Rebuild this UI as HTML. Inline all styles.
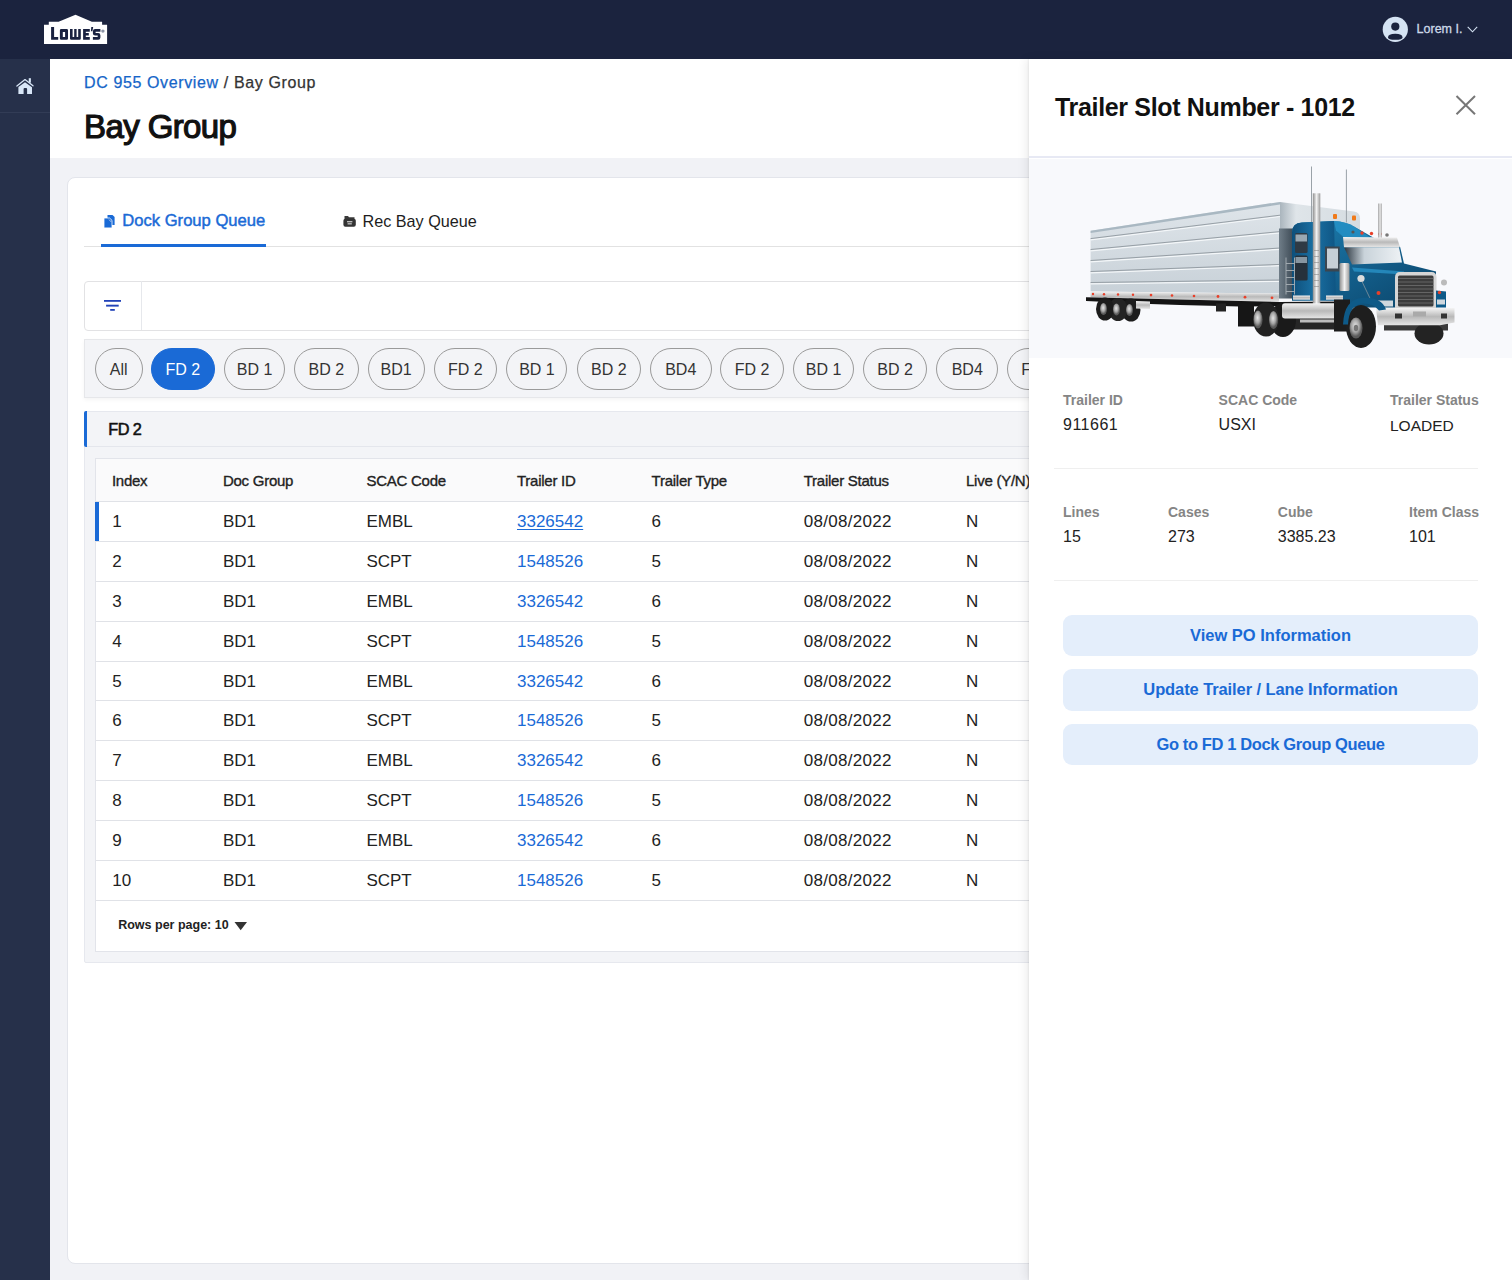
<!DOCTYPE html>
<html><head><meta charset="utf-8"><style>
*{box-sizing:border-box;margin:0;padding:0}
html,body{width:1512px;height:1280px;overflow:hidden;background:#f1f2f6;font-family:"Liberation Sans",sans-serif;color:#222}
.t{position:absolute;white-space:nowrap}
.b{position:absolute}
</style></head><body>
<div class="b" style="left:0;top:0;width:1512px;height:59px;background:#1b233e"></div>
<svg class="b" style="left:40px;top:10px" width="72" height="40" viewBox="40 10 72 40">
<polygon fill="#fff" points="44,24.8 48.8,24.8 48.8,21.7 58.6,21.7 75.5,14.8 91.9,21.7 102.1,21.7 102.1,24.8 107.1,24.8 107.1,44 44,44"/>
<g fill="#1a2240">
<path d="M51.1,26.9 H54.1 V37 H58.2 V39.7 H51.1Z"/>
<path fill-rule="evenodd" d="M61.2,29 H66.7 Q68,29 68,30.3 V38.4 Q68,39.7 66.7,39.7 H61.2 Q59.9,39.7 59.9,38.4 V30.3 Q59.9,29 61.2,29Z M62.8,31.9 V37 H65.1 V31.9Z"/>
<path d="M70,29 H72.6 V37 H74.2 V29 H76.6 V37 H78.2 V29 H80.8 V38.4 Q80.8,39.7 79.5,39.7 H71.3 Q70,39.7 70,38.4Z"/>
<path d="M83.1,29 H89.8 V31.7 H85.8 V33 H88.8 V35.5 H85.8 V37 H89.8 V39.7 H83.1Z"/>
<path d="M91.3,27.1 H93.2 L92.4,31.3 H90.9Z"/>
<path d="M100.4,29 H95.1 Q92.9,29 92.9,31.2 V33.4 Q92.9,35.5 95.1,35.5 H97.7 V37 H92.9 V39.7 H98.2 Q100.4,39.7 100.4,37.5 V35.2 Q100.4,33 98.2,33 H95.6 V31.7 H100.4Z"/>
</g>
<circle cx="102.9" cy="31.1" r="1.7" fill="#8d95a6"/>
</svg>
<svg class="b" style="left:1382px;top:16px" width="27" height="27" viewBox="0 0 27 27">
<circle cx="13.3" cy="13.4" r="12.6" fill="#d5e3f3"/>
<circle cx="13.3" cy="10.6" r="4.1" fill="#1b233e"/>
<path d="M6,21.4 Q6,17.7 13.3,17.7 Q20.5,17.7 20.5,21.4 Q20.5,23.8 13.3,23.8 Q6,23.8 6,21.4Z" fill="#1b233e"/>
</svg>
<div class="t " style="left:1416.6px;top:23.12px;font-size:12.5px;line-height:12.5px;color:#cdd9e8;-webkit-text-stroke:0.3px #cdd9e8">Lorem I.</div>
<svg class="b" style="left:1466px;top:25px" width="13" height="9" viewBox="0 0 13 9">
<polyline points="1.7,1.8 6.5,6.8 11.2,1.8" fill="none" stroke="#d5e3f3" stroke-width="1.1"/>
</svg>
<div class="b" style="left:0;top:59px;width:50px;height:1221px;background:#26304a"></div>
<div class="b" style="left:0;top:112px;width:50px;height:1px;background:#323c56"></div>
<svg class="b" style="left:14px;top:76px" width="22" height="20" viewBox="14 76 22 20">
<rect x="28.75" y="78.2" width="2.15" height="4.5" fill="#d8e6f7"/>
<path d="M18.4,87 L25,82.3 L32,87.3 L32,93.9 L27.1,93.9 L27.1,89 Q27.1,88 26.1,88 L24.6,88 Q23.6,88 23.6,89 L23.6,93.9 L18.4,93.9Z" fill="#d8e6f7"/>
<polyline points="16.9,86 25,79.6 33,85.8" fill="none" stroke="#d8e6f7" stroke-width="1.3" stroke-linecap="round" stroke-linejoin="round"/>
</svg>
<div class="b" style="left:50px;top:59px;width:1462px;height:99px;background:#fff"></div>
<div class="t " style="left:84px;top:75.46px;font-size:16px;line-height:16px;color:#333;letter-spacing:0.62px;-webkit-text-stroke:0.25px #333"><span style="color:#1565c8;-webkit-text-stroke:0.25px #1565c8">DC 955 Overview</span> / Bay Group</div>
<div class="t " style="left:84px;top:110.47px;font-size:33px;line-height:33px;color:#111;letter-spacing:-0.6px;-webkit-text-stroke:1.2px #111">Bay Group</div>
<div class="b" style="left:67px;top:177px;width:1450px;height:1086.5px;background:#fff;border:1px solid #e3e5eb;border-radius:8px"></div>
<svg class="b" style="left:102px;top:213px" width="15" height="17" viewBox="102 213 15 17">
<path d="M107.5,215 L112.5,215 L114.6,217 L114.6,225 L107.5,225Z" fill="#1a6ad6"/>
<path d="M104,218 L109.5,218 L112,220.3 L112,227.9 L104,227.9Z" fill="#1a6ad6" stroke="#fff" stroke-width="0.8"/>
<path d="M109,219.5 L111,221.8" stroke="#cfe0f8" stroke-width="0.8"/>
</svg>
<div class="t " style="left:122.3px;top:213.35px;font-size:16.6px;line-height:16.6px;color:#1a6ad6;-webkit-text-stroke:0.45px #1a6ad6">Dock Group Queue</div>
<svg class="b" style="left:342px;top:214px" width="15" height="14" viewBox="342 214 15 14">
<path d="M344.5,216 L348,216 L349,217.2 L354.5,217.2 L354.5,219 L344.5,219Z" fill="#3a3a3a"/>
<rect x="343.4" y="218.7" width="12.4" height="8.1" rx="2" fill="#333"/>
<rect x="347" y="221.2" width="5.4" height="1.1" fill="#ddd"/>
<rect x="347.6" y="223.3" width="4.2" height="1.1" fill="#ddd"/>
</svg>
<div class="t " style="left:362.5px;top:213.09px;font-size:16.2px;line-height:16.2px;color:#1d1d1d">Rec Bay Queue</div>
<div class="b" style="left:84px;top:245.5px;width:960px;height:1px;background:#e2e2e2"></div>
<div class="b" style="left:101px;top:244px;width:165px;height:2.7px;background:#1a6ad6"></div>
<div class="b" style="left:84px;top:280.5px;width:960px;height:50.5px;border:1px solid #e2e2e4;border-radius:4px;background:#fff"></div>
<div class="b" style="left:141px;top:281px;width:1px;height:49px;background:#e6e8ec"></div>
<svg class="b" style="left:102px;top:298px" width="20" height="14" viewBox="102 298 20 14">
<rect x="104" y="300" width="17" height="1.8" fill="#2243b8"/>
<rect x="106.1" y="304.7" width="12.6" height="1.9" fill="#2243b8"/>
<rect x="110.2" y="309" width="4.6" height="1.8" fill="#2243b8"/>
</svg>
<div class="b" style="left:84px;top:339px;width:960px;height:59px;background:#f3f4f7;border:1px solid #e6e7ea;box-shadow:0 2px 4px rgba(0,0,0,0.045)"></div>
<div class="b" style="left:94.5px;top:347.5px;width:48.2px;height:42px;border:1px solid #9a9a9a;border-radius:21px;background:transparent;color:#333;font-size:16px;line-height:42px;text-align:center;white-space:nowrap">All</div>
<div class="b" style="left:151px;top:347.5px;width:63.8px;height:42px;border:1px solid #1a6ad6;border-radius:21px;background:#1a6ad6;color:#fff;font-size:16px;line-height:42px;text-align:center;white-space:nowrap">FD 2</div>
<div class="b" style="left:224.2px;top:347.5px;width:60.8px;height:42px;border:1px solid #9a9a9a;border-radius:21px;background:transparent;color:#333;font-size:16px;line-height:42px;text-align:center;white-space:nowrap">BD 1</div>
<div class="b" style="left:294px;top:347.5px;width:64.6px;height:42px;border:1px solid #9a9a9a;border-radius:21px;background:transparent;color:#333;font-size:16px;line-height:42px;text-align:center;white-space:nowrap">BD 2</div>
<div class="b" style="left:367.5px;top:347.5px;width:57.2px;height:42px;border:1px solid #9a9a9a;border-radius:21px;background:transparent;color:#333;font-size:16px;line-height:42px;text-align:center;white-space:nowrap">BD1</div>
<div class="b" style="left:433.7px;top:347.5px;width:63.5px;height:42px;border:1px solid #9a9a9a;border-radius:21px;background:transparent;color:#333;font-size:16px;line-height:42px;text-align:center;white-space:nowrap">FD 2</div>
<div class="b" style="left:506.4px;top:347.5px;width:61.1px;height:42px;border:1px solid #9a9a9a;border-radius:21px;background:transparent;color:#333;font-size:16px;line-height:42px;text-align:center;white-space:nowrap">BD 1</div>
<div class="b" style="left:576.5px;top:347.5px;width:64.5px;height:42px;border:1px solid #9a9a9a;border-radius:21px;background:transparent;color:#333;font-size:16px;line-height:42px;text-align:center;white-space:nowrap">BD 2</div>
<div class="b" style="left:650px;top:347.5px;width:61.5px;height:42px;border:1px solid #9a9a9a;border-radius:21px;background:transparent;color:#333;font-size:16px;line-height:42px;text-align:center;white-space:nowrap">BD4</div>
<div class="b" style="left:720.4px;top:347.5px;width:63.5px;height:42px;border:1px solid #9a9a9a;border-radius:21px;background:transparent;color:#333;font-size:16px;line-height:42px;text-align:center;white-space:nowrap">FD 2</div>
<div class="b" style="left:792.8px;top:347.5px;width:61.5px;height:42px;border:1px solid #9a9a9a;border-radius:21px;background:transparent;color:#333;font-size:16px;line-height:42px;text-align:center;white-space:nowrap">BD 1</div>
<div class="b" style="left:863.2px;top:347.5px;width:63.8px;height:42px;border:1px solid #9a9a9a;border-radius:21px;background:transparent;color:#333;font-size:16px;line-height:42px;text-align:center;white-space:nowrap">BD 2</div>
<div class="b" style="left:936.3px;top:347.5px;width:61.9px;height:42px;border:1px solid #9a9a9a;border-radius:21px;background:transparent;color:#333;font-size:16px;line-height:42px;text-align:center;white-space:nowrap">BD4</div>
<div class="b" style="left:1007px;top:347.5px;width:63.0px;height:42px;border:1px solid #9a9a9a;border-radius:21px;background:transparent;color:#333;font-size:16px;line-height:42px;text-align:center;white-space:nowrap">FD 2</div>
<div class="b" style="left:84px;top:410.5px;width:970px;height:552.5px;background:#f3f4f7;border:1px solid #e6e8ee;border-radius:2px"></div>
<div class="b" style="left:84px;top:410.5px;width:3px;height:36.5px;background:#1a6ad6;border-radius:2px 0 0 2px"></div>
<div class="b" style="left:87px;top:446px;width:960px;height:1px;background:#e4e6ec"></div>
<div class="t " style="left:108.3px;top:420.90px;font-size:16.3px;line-height:16.3px;color:#111;letter-spacing:-0.55px;-webkit-text-stroke:0.55px #111">FD 2</div>
<div class="b" style="left:95px;top:458px;width:960px;height:494px;background:#fff;border:1px solid #e2e4ea"></div>
<div class="b" style="left:96px;top:459px;width:960px;height:42px;background:#fafafb"></div>
<div class="t " style="left:111.9px;top:472.70px;font-size:15px;line-height:15px;color:#222;letter-spacing:-0.25px;-webkit-text-stroke:0.35px #222">Index</div>
<div class="t " style="left:222.9px;top:472.70px;font-size:15px;line-height:15px;color:#222;letter-spacing:-0.25px;-webkit-text-stroke:0.35px #222">Doc Group</div>
<div class="t " style="left:366.4px;top:472.70px;font-size:15px;line-height:15px;color:#222;letter-spacing:-0.25px;-webkit-text-stroke:0.35px #222">SCAC Code</div>
<div class="t " style="left:517px;top:472.70px;font-size:15px;line-height:15px;color:#222;letter-spacing:-0.25px;-webkit-text-stroke:0.35px #222">Trailer ID</div>
<div class="t " style="left:651.6px;top:472.70px;font-size:15px;line-height:15px;color:#222;letter-spacing:-0.25px;-webkit-text-stroke:0.35px #222">Trailer Type</div>
<div class="t " style="left:803.7px;top:472.70px;font-size:15px;line-height:15px;color:#222;letter-spacing:-0.25px;-webkit-text-stroke:0.35px #222">Trailer Status</div>
<div class="t " style="left:966px;top:472.70px;font-size:15px;line-height:15px;color:#222;letter-spacing:-0.25px;-webkit-text-stroke:0.35px #222">Live (Y/N)</div>
<div class="b" style="left:96px;top:501.10px;width:960px;height:1px;background:#e0e2e7"></div>
<div class="t " style="left:112.3px;top:512.91px;font-size:17px;line-height:17px;color:#222">1</div>
<div class="t " style="left:222.9px;top:512.91px;font-size:17px;line-height:17px;color:#222">BD1</div>
<div class="t " style="left:366.4px;top:512.91px;font-size:17px;line-height:17px;color:#222">EMBL</div>
<div class="t " style="left:517px;top:512.91px;font-size:17px;line-height:17px;color:#1a6ad6;text-decoration:underline;text-underline-offset:2px">3326542</div>
<div class="t " style="left:651.6px;top:512.91px;font-size:17px;line-height:17px;color:#222">6</div>
<div class="t " style="left:803.7px;top:512.91px;font-size:17px;line-height:17px;color:#222;letter-spacing:0.3px">08/08/2022</div>
<div class="t " style="left:966px;top:512.91px;font-size:17px;line-height:17px;color:#222">N</div>
<div class="b" style="left:96px;top:540.97px;width:960px;height:1px;background:#e0e2e7"></div>
<div class="t " style="left:112.3px;top:552.81px;font-size:17px;line-height:17px;color:#222">2</div>
<div class="t " style="left:222.9px;top:552.81px;font-size:17px;line-height:17px;color:#222">BD1</div>
<div class="t " style="left:366.4px;top:552.81px;font-size:17px;line-height:17px;color:#222">SCPT</div>
<div class="t " style="left:517px;top:552.81px;font-size:17px;line-height:17px;color:#1a6ad6">1548526</div>
<div class="t " style="left:651.6px;top:552.81px;font-size:17px;line-height:17px;color:#222">5</div>
<div class="t " style="left:803.7px;top:552.81px;font-size:17px;line-height:17px;color:#222;letter-spacing:0.3px">08/08/2022</div>
<div class="t " style="left:966px;top:552.81px;font-size:17px;line-height:17px;color:#222">N</div>
<div class="b" style="left:96px;top:580.84px;width:960px;height:1px;background:#e0e2e7"></div>
<div class="t " style="left:112.3px;top:592.71px;font-size:17px;line-height:17px;color:#222">3</div>
<div class="t " style="left:222.9px;top:592.71px;font-size:17px;line-height:17px;color:#222">BD1</div>
<div class="t " style="left:366.4px;top:592.71px;font-size:17px;line-height:17px;color:#222">EMBL</div>
<div class="t " style="left:517px;top:592.71px;font-size:17px;line-height:17px;color:#1a6ad6">3326542</div>
<div class="t " style="left:651.6px;top:592.71px;font-size:17px;line-height:17px;color:#222">6</div>
<div class="t " style="left:803.7px;top:592.71px;font-size:17px;line-height:17px;color:#222;letter-spacing:0.3px">08/08/2022</div>
<div class="t " style="left:966px;top:592.71px;font-size:17px;line-height:17px;color:#222">N</div>
<div class="b" style="left:96px;top:620.71px;width:960px;height:1px;background:#e0e2e7"></div>
<div class="t " style="left:112.3px;top:632.61px;font-size:17px;line-height:17px;color:#222">4</div>
<div class="t " style="left:222.9px;top:632.61px;font-size:17px;line-height:17px;color:#222">BD1</div>
<div class="t " style="left:366.4px;top:632.61px;font-size:17px;line-height:17px;color:#222">SCPT</div>
<div class="t " style="left:517px;top:632.61px;font-size:17px;line-height:17px;color:#1a6ad6">1548526</div>
<div class="t " style="left:651.6px;top:632.61px;font-size:17px;line-height:17px;color:#222">5</div>
<div class="t " style="left:803.7px;top:632.61px;font-size:17px;line-height:17px;color:#222;letter-spacing:0.3px">08/08/2022</div>
<div class="t " style="left:966px;top:632.61px;font-size:17px;line-height:17px;color:#222">N</div>
<div class="b" style="left:96px;top:660.58px;width:960px;height:1px;background:#e0e2e7"></div>
<div class="t " style="left:112.3px;top:672.51px;font-size:17px;line-height:17px;color:#222">5</div>
<div class="t " style="left:222.9px;top:672.51px;font-size:17px;line-height:17px;color:#222">BD1</div>
<div class="t " style="left:366.4px;top:672.51px;font-size:17px;line-height:17px;color:#222">EMBL</div>
<div class="t " style="left:517px;top:672.51px;font-size:17px;line-height:17px;color:#1a6ad6">3326542</div>
<div class="t " style="left:651.6px;top:672.51px;font-size:17px;line-height:17px;color:#222">6</div>
<div class="t " style="left:803.7px;top:672.51px;font-size:17px;line-height:17px;color:#222;letter-spacing:0.3px">08/08/2022</div>
<div class="t " style="left:966px;top:672.51px;font-size:17px;line-height:17px;color:#222">N</div>
<div class="b" style="left:96px;top:700.45px;width:960px;height:1px;background:#e0e2e7"></div>
<div class="t " style="left:112.3px;top:712.41px;font-size:17px;line-height:17px;color:#222">6</div>
<div class="t " style="left:222.9px;top:712.41px;font-size:17px;line-height:17px;color:#222">BD1</div>
<div class="t " style="left:366.4px;top:712.41px;font-size:17px;line-height:17px;color:#222">SCPT</div>
<div class="t " style="left:517px;top:712.41px;font-size:17px;line-height:17px;color:#1a6ad6">1548526</div>
<div class="t " style="left:651.6px;top:712.41px;font-size:17px;line-height:17px;color:#222">5</div>
<div class="t " style="left:803.7px;top:712.41px;font-size:17px;line-height:17px;color:#222;letter-spacing:0.3px">08/08/2022</div>
<div class="t " style="left:966px;top:712.41px;font-size:17px;line-height:17px;color:#222">N</div>
<div class="b" style="left:96px;top:740.32px;width:960px;height:1px;background:#e0e2e7"></div>
<div class="t " style="left:112.3px;top:752.31px;font-size:17px;line-height:17px;color:#222">7</div>
<div class="t " style="left:222.9px;top:752.31px;font-size:17px;line-height:17px;color:#222">BD1</div>
<div class="t " style="left:366.4px;top:752.31px;font-size:17px;line-height:17px;color:#222">EMBL</div>
<div class="t " style="left:517px;top:752.31px;font-size:17px;line-height:17px;color:#1a6ad6">3326542</div>
<div class="t " style="left:651.6px;top:752.31px;font-size:17px;line-height:17px;color:#222">6</div>
<div class="t " style="left:803.7px;top:752.31px;font-size:17px;line-height:17px;color:#222;letter-spacing:0.3px">08/08/2022</div>
<div class="t " style="left:966px;top:752.31px;font-size:17px;line-height:17px;color:#222">N</div>
<div class="b" style="left:96px;top:780.19px;width:960px;height:1px;background:#e0e2e7"></div>
<div class="t " style="left:112.3px;top:792.21px;font-size:17px;line-height:17px;color:#222">8</div>
<div class="t " style="left:222.9px;top:792.21px;font-size:17px;line-height:17px;color:#222">BD1</div>
<div class="t " style="left:366.4px;top:792.21px;font-size:17px;line-height:17px;color:#222">SCPT</div>
<div class="t " style="left:517px;top:792.21px;font-size:17px;line-height:17px;color:#1a6ad6">1548526</div>
<div class="t " style="left:651.6px;top:792.21px;font-size:17px;line-height:17px;color:#222">5</div>
<div class="t " style="left:803.7px;top:792.21px;font-size:17px;line-height:17px;color:#222;letter-spacing:0.3px">08/08/2022</div>
<div class="t " style="left:966px;top:792.21px;font-size:17px;line-height:17px;color:#222">N</div>
<div class="b" style="left:96px;top:820.06px;width:960px;height:1px;background:#e0e2e7"></div>
<div class="t " style="left:112.3px;top:832.11px;font-size:17px;line-height:17px;color:#222">9</div>
<div class="t " style="left:222.9px;top:832.11px;font-size:17px;line-height:17px;color:#222">BD1</div>
<div class="t " style="left:366.4px;top:832.11px;font-size:17px;line-height:17px;color:#222">EMBL</div>
<div class="t " style="left:517px;top:832.11px;font-size:17px;line-height:17px;color:#1a6ad6">3326542</div>
<div class="t " style="left:651.6px;top:832.11px;font-size:17px;line-height:17px;color:#222">6</div>
<div class="t " style="left:803.7px;top:832.11px;font-size:17px;line-height:17px;color:#222;letter-spacing:0.3px">08/08/2022</div>
<div class="t " style="left:966px;top:832.11px;font-size:17px;line-height:17px;color:#222">N</div>
<div class="b" style="left:96px;top:859.93px;width:960px;height:1px;background:#e0e2e7"></div>
<div class="t " style="left:112.3px;top:872.01px;font-size:17px;line-height:17px;color:#222">10</div>
<div class="t " style="left:222.9px;top:872.01px;font-size:17px;line-height:17px;color:#222">BD1</div>
<div class="t " style="left:366.4px;top:872.01px;font-size:17px;line-height:17px;color:#222">SCPT</div>
<div class="t " style="left:517px;top:872.01px;font-size:17px;line-height:17px;color:#1a6ad6">1548526</div>
<div class="t " style="left:651.6px;top:872.01px;font-size:17px;line-height:17px;color:#222">5</div>
<div class="t " style="left:803.7px;top:872.01px;font-size:17px;line-height:17px;color:#222;letter-spacing:0.3px">08/08/2022</div>
<div class="t " style="left:966px;top:872.01px;font-size:17px;line-height:17px;color:#222">N</div>
<div class="b" style="left:96px;top:899.80px;width:960px;height:1px;background:#e0e2e7"></div>
<div class="b" style="left:95px;top:501.6px;width:3.5px;height:39.2px;background:#1a6ad6"></div>
<div class="t " style="left:118.2px;top:919.42px;font-size:12.5px;line-height:12.5px;color:#222;font-weight:bold">Rows per page: 10</div>
<svg class="b" style="left:232px;top:919px" width="18" height="14" viewBox="232 919 18 14">
<polygon points="234.5,922 247,922 240.7,930.3" fill="#333"/>
</svg>
<div class="b" style="left:1029px;top:59px;width:483px;height:1221px;background:#fff;box-shadow:-3px 0 9px rgba(0,0,0,0.075),-1px 0 1.5px rgba(0,0,0,0.05)"></div>
<div class="t " style="left:1055px;top:95.04px;font-size:25px;line-height:25px;color:#111;font-weight:bold;letter-spacing:-0.33px">Trailer Slot Number - 1012</div>
<svg class="b" style="left:1452px;top:92px" width="27" height="27" viewBox="1452 92 27 27">
<path d="M1456.5,96 L1475,114.3 M1475,96 L1456.5,114.3" stroke="#777" stroke-width="2"/>
</svg>
<div class="b" style="left:1029px;top:156.2px;width:483px;height:2px;background:#e7e9f4"></div>
<div class="b" style="left:1029px;top:158.5px;width:483px;height:199px;background:#f8f9fc"></div>
<svg class="b" style="left:1029px;top:158.5px" width="483" height="199" viewBox="1029 158.5 483 199">
<defs>
<linearGradient id="trl" x1="0" y1="0" x2="0" y2="1"><stop offset="0" stop-color="#dfe5ea"/><stop offset="1" stop-color="#c8d1d8"/></linearGradient>
<linearGradient id="trf" x1="0" y1="0" x2="1" y2="0"><stop offset="0" stop-color="#aab5bd"/><stop offset="0.2" stop-color="#dfe5e9"/><stop offset="1" stop-color="#d5dce1"/></linearGradient>
<linearGradient id="trs" x1="0" y1="0" x2="1" y2="0"><stop offset="0" stop-color="#6f7d88"/><stop offset="1" stop-color="#3f4c57"/></linearGradient>
<linearGradient id="cab" x1="0" y1="0" x2="1" y2="1"><stop offset="0" stop-color="#1d7fb0"/><stop offset="0.5" stop-color="#135f8c"/><stop offset="1" stop-color="#0b4468"/></linearGradient>
<linearGradient id="slp" x1="0" y1="0" x2="1" y2="0"><stop offset="0" stop-color="#0e4f7a"/><stop offset="0.5" stop-color="#1a70a3"/><stop offset="1" stop-color="#0f5583"/></linearGradient>
<linearGradient id="chr" x1="0" y1="0" x2="0" y2="1"><stop offset="0" stop-color="#f4f4f4"/><stop offset="0.5" stop-color="#b9b9b9"/><stop offset="1" stop-color="#e6e6e6"/></linearGradient>
<linearGradient id="chv" x1="0" y1="0" x2="1" y2="0"><stop offset="0" stop-color="#8e8e8e"/><stop offset="0.5" stop-color="#f2f2f2"/><stop offset="1" stop-color="#9a9a9a"/></linearGradient>
<linearGradient id="win" x1="0" y1="0" x2="1" y2="0"><stop offset="0" stop-color="#2b3640"/><stop offset="0.35" stop-color="#c9d3da"/><stop offset="1" stop-color="#eef2f5"/></linearGradient>
<radialGradient id="hub" cx="0.45" cy="0.4"><stop offset="0" stop-color="#e6e6e6"/><stop offset="0.6" stop-color="#a5a5a5"/><stop offset="1" stop-color="#5a5a5a"/></radialGradient>
</defs>
<!-- trailer side -->
<polygon points="1090.6,230.3 1280,201.4 1280,293 1090.6,291" fill="url(#trl)"/>
<polygon points="1090.6,230.3 1280,201.4 1280,204 1090.6,232.5" fill="#a9b8c2"/>
<g stroke="#f4f7f9" stroke-width="1.2">
<line x1="1090.6" y1="239.4" x2="1280" y2="216"/>
<line x1="1090.6" y1="250.3" x2="1280" y2="232.4"/>
<line x1="1090.6" y1="261.3" x2="1280" y2="248.8"/>
<line x1="1090.6" y1="272.3" x2="1280" y2="265.2"/>
<line x1="1090.6" y1="283.3" x2="1280" y2="280.8"/>
</g>
<g stroke="#8e979e" stroke-width="0.9">
<line x1="1090.6" y1="238.1" x2="1280" y2="214.7"/>
<line x1="1090.6" y1="249" x2="1280" y2="231.1"/>
<line x1="1090.6" y1="260" x2="1280" y2="247.5"/>
<line x1="1090.6" y1="271" x2="1280" y2="263.9"/>
<line x1="1090.6" y1="282" x2="1280" y2="279.5"/>
</g>
<!-- trailer front face -->
<path d="M1280,201.4 L1354,211 Q1360,212 1360,218 L1360,296 L1280,296Z" fill="url(#trf)"/>
<rect x="1279" y="228" width="14" height="70" fill="url(#trs)"/>
<!-- trailer bottom strip -->
<polygon points="1090.6,291 1279,293 1279,301.4 1090.6,296.7" fill="url(#chr)"/>
<g fill="#e8402a">
<circle cx="1093" cy="293.5" r="1.2"/><circle cx="1104" cy="293.8" r="1.2"/><circle cx="1118" cy="294" r="1.2"/><circle cx="1133" cy="294.3" r="1.2"/><circle cx="1151" cy="294.6" r="1.3"/><circle cx="1172" cy="295" r="1.3"/><circle cx="1194" cy="295.5" r="1.3"/><circle cx="1218" cy="296" r="1.4"/><circle cx="1245" cy="296.7" r="1.4"/><circle cx="1272" cy="297.3" r="1.4"/>
</g>
<!-- chassis -->
<polygon points="1086,296.7 1279,301.4 1345,301 1345,305 1240,306 1180,304.5 1150,303.5 1086,300.6" fill="#141414"/>
<rect x="1238" y="303" width="16" height="23" fill="#161616"/>
<rect x="1216" y="303" width="10" height="8" fill="#222"/>
<rect x="1292" y="316" width="53" height="13" fill="#262626"/>
<!-- rear trailer wheels -->
<ellipse cx="1131" cy="309.5" rx="9.5" ry="11.5" fill="#1c1c1c"/>
<ellipse cx="1118" cy="309" rx="9.5" ry="11.5" fill="#242424"/>
<ellipse cx="1105" cy="308.5" rx="9" ry="11.5" fill="#1c1c1c"/>
<ellipse cx="1103.5" cy="308.5" rx="3.5" ry="6" fill="url(#hub)"/>
<ellipse cx="1116.5" cy="309" rx="3.5" ry="6" fill="url(#hub)"/>
<ellipse cx="1129.5" cy="309.5" rx="3.5" ry="6" fill="url(#hub)"/>
<polygon points="1136,300.6 1150,301 1150,308.4 1136,308" fill="url(#chr)"/>
<!-- drive wheels -->
<ellipse cx="1283" cy="319.5" rx="13" ry="17" fill="#1a1a1a"/>
<ellipse cx="1266" cy="319" rx="13" ry="17" fill="#222"/>
<ellipse cx="1258" cy="319" rx="4.5" ry="9" fill="url(#hub)"/>
<ellipse cx="1273.5" cy="319.5" rx="4.5" ry="9" fill="url(#hub)"/>
<!-- antennas -->
<line x1="1311.5" y1="166" x2="1311.5" y2="223" stroke="#9aa2a8" stroke-width="1"/>
<line x1="1346.4" y1="169" x2="1346.4" y2="222" stroke="#9aa2a8" stroke-width="1"/>
<!-- cab body -->
<path d="M1292,300 L1292,232 Q1292,222.5 1302,222 L1334,220.5 Q1346,221 1354,226 L1375,238 L1400,246 L1404,263 L1436,271 L1436,307 L1345,307 L1345,300Z" fill="url(#cab)"/>
<path d="M1292,232 Q1292,222.5 1302,222 L1334,220.5 L1336,300 L1292,300Z" fill="url(#slp)"/>
<path d="M1334,220.5 Q1346,221 1354,226 L1375,240 L1352,244 L1336,230Z" fill="#2694c9" opacity="0.8"/>
<path d="M1352,267 L1404,271 L1404,274 L1354,271Z" fill="#2c9ad0" opacity="0.7"/>
<!-- side windows -->
<rect x="1295" y="232.6" width="12.6" height="20" rx="1.5" fill="#2f3a44"/>
<rect x="1295.5" y="234" width="11.5" height="7" fill="#9aa8b2"/>
<rect x="1295" y="255" width="12.6" height="25" rx="1.5" fill="#26313b"/>
<rect x="1295.5" y="256.5" width="11.5" height="6" fill="#8796a1"/>
<!-- door window -->
<path d="M1325,246 L1339.7,246 L1339.7,271 L1325,271Z" fill="#3b4650"/>
<path d="M1327,248 L1338,248 L1338,268 L1327,268Z" fill="#c6cfd6"/>
<!-- windshield -->
<path d="M1344,246.7 L1399,246.7 L1402,262 L1352,264Z" fill="url(#win)"/>
<!-- visor -->
<path d="M1343,236.5 L1397,237 L1400,246.7 L1344,246.7Z" fill="url(#chr)"/>
<!-- roof lights -->
<g fill="#f07a1a"><rect x="1333" y="213.5" width="4" height="5" rx="1"/><rect x="1352" y="215" width="4" height="5" rx="1"/></g>
<g fill="#e8402a"><circle cx="1362" cy="232.5" r="1.7"/><circle cx="1371.5" cy="233" r="1.7"/><circle cx="1380" cy="233.5" r="1.7"/></g>
<circle cx="1353" cy="231.5" r="1.6" fill="#555"/><circle cx="1387" cy="234.5" r="1.8" fill="#777"/>
<!-- stacks -->
<rect x="1312.8" y="192.8" width="7.5" height="113" fill="url(#chv)"/>
<g stroke="#888" stroke-width="0.6"><line x1="1314" y1="250" x2="1319" y2="250"/><line x1="1314" y1="256" x2="1319" y2="256"/><line x1="1314" y1="262" x2="1319" y2="262"/><line x1="1314" y1="268" x2="1319" y2="268"/><line x1="1314" y1="274" x2="1319" y2="274"/><line x1="1314" y1="280" x2="1319" y2="280"/><line x1="1314" y1="286" x2="1319" y2="286"/></g>
<rect x="1378.3" y="203" width="3.4" height="34" fill="url(#chv)"/>
<!-- mirror -->
<rect x="1339.5" y="262.5" width="10" height="28" rx="1.5" fill="url(#chv)"/>
<!-- ladder -->
<g stroke="#a8b0b5" stroke-width="0.9" fill="none"><line x1="1286" y1="257" x2="1286" y2="294"/><line x1="1294.5" y1="257" x2="1294.5" y2="294"/>
<line x1="1286" y1="263" x2="1294.5" y2="263"/><line x1="1286" y1="270" x2="1294.5" y2="270"/><line x1="1286" y1="277" x2="1294.5" y2="277"/><line x1="1286" y1="284" x2="1294.5" y2="284"/><line x1="1286" y1="291" x2="1294.5" y2="291"/></g>
<!-- steps / fuel tank -->
<rect x="1293" y="295" width="17" height="4.2" fill="url(#chr)"/>
<rect x="1326" y="295" width="17" height="4.2" fill="url(#chr)"/>
<rect x="1282" y="302.7" width="58" height="15.3" rx="3" fill="url(#chr)"/>
<rect x="1300" y="319" width="36" height="3" fill="#bdbdbd"/>
<!-- grille -->
<path d="M1395,307.5 L1395,277 Q1395,271.5 1400,271.5 L1431.5,271.5 Q1436.5,271.5 1436.5,277 L1436.5,307.5Z" fill="#d6d6d6"/>
<rect x="1398" y="275" width="35.5" height="31" rx="1.5" fill="#3c3c3c"/>
<g stroke="#777" stroke-width="0.7"><line x1="1398" y1="278" x2="1433.5" y2="278"/><line x1="1398" y1="281.5" x2="1433.5" y2="281.5"/><line x1="1398" y1="285" x2="1433.5" y2="285"/><line x1="1398" y1="288.5" x2="1433.5" y2="288.5"/><line x1="1398" y1="292" x2="1433.5" y2="292"/><line x1="1398" y1="295.5" x2="1433.5" y2="295.5"/><line x1="1398" y1="299" x2="1433.5" y2="299"/><line x1="1398" y1="302.5" x2="1433.5" y2="302.5"/></g>
<!-- right side fender/headlight -->
<path d="M1436,290 L1446,291 L1446,307 L1436,307Z" fill="#0e5a88"/>
<rect x="1437" y="299" width="8" height="5" fill="#cfd8de"/>
<rect x="1378" y="300" width="15" height="6" fill="#cfd8de"/>
<circle cx="1378.5" cy="292.5" r="2" fill="#e8402a"/><circle cx="1439.5" cy="292" r="1.7" fill="#e8402a"/>
<circle cx="1444" cy="282" r="3" fill="#bbb"/>
<circle cx="1361" cy="278" r="3.6" fill="#ddd"/>
<line x1="1362" y1="281" x2="1372" y2="302" stroke="#aaa" stroke-width="0.6"/>
<!-- under bumper -->
<rect x="1384" y="323" width="64" height="7" fill="#3a3a3a"/>
<!-- rear right front wheel -->
<ellipse cx="1429" cy="333" rx="14.5" ry="11" fill="#232323"/>
<!-- bumper -->
<path d="M1376,307.5 L1454.5,307.5 L1454.5,322 L1440,324.8 L1378,324.8Z" fill="url(#chr)"/>
<rect x="1395" y="313" width="7" height="5" fill="#333"/><rect x="1441" y="313" width="6" height="5" fill="#333"/>
<rect x="1413" y="311" width="13" height="5" fill="#aaa"/>
<rect x="1334" y="299" width="16" height="32" fill="#1c1c1c"/>
<!-- front wheel + fender -->
<ellipse cx="1361" cy="326" rx="15" ry="21.5" fill="#1e1e1e"/>
<ellipse cx="1356" cy="327.5" rx="6.5" ry="10.5" fill="url(#hub)"/>
<ellipse cx="1356" cy="327.5" rx="2.2" ry="3.3" fill="#777"/>
<path d="M1343,324 Q1344,298 1364,297 Q1382,297 1386,309 L1379,310 Q1374,303 1363,303 Q1349,304 1348,324Z" fill="#0e5a88"/>
</svg>

<div class="t " style="left:1063px;top:393.15px;font-size:14px;line-height:14px;color:#858585;font-weight:bold">Trailer ID</div>
<div class="t " style="left:1218.6px;top:393.15px;font-size:14px;line-height:14px;color:#858585;font-weight:bold">SCAC Code</div>
<div class="t " style="left:1390px;top:393.15px;font-size:14px;line-height:14px;color:#858585;font-weight:bold">Trailer Status</div>
<div class="t " style="left:1063px;top:417.46px;font-size:16px;line-height:16px;color:#222;letter-spacing:0.5px">911661</div>
<div class="t " style="left:1218.6px;top:417.46px;font-size:16px;line-height:16px;color:#222">USXI</div>
<div class="t " style="left:1390px;top:417.88px;font-size:15.5px;line-height:15.5px;color:#222">LOADED</div>
<div class="b" style="left:1054px;top:468px;width:424px;height:1px;background:#efefef"></div>
<div class="t " style="left:1063px;top:504.65px;font-size:14px;line-height:14px;color:#858585;font-weight:bold">Lines</div>
<div class="t " style="left:1168px;top:504.65px;font-size:14px;line-height:14px;color:#858585;font-weight:bold">Cases</div>
<div class="t " style="left:1277.8px;top:504.65px;font-size:14px;line-height:14px;color:#858585;font-weight:bold">Cube</div>
<div class="t " style="left:1409px;top:504.65px;font-size:14px;line-height:14px;color:#858585;font-weight:bold">Item Class</div>
<div class="t " style="left:1063px;top:528.76px;font-size:16px;line-height:16px;color:#222">15</div>
<div class="t " style="left:1168px;top:528.76px;font-size:16px;line-height:16px;color:#222">273</div>
<div class="t " style="left:1277.8px;top:528.76px;font-size:16px;line-height:16px;color:#222">3385.23</div>
<div class="t " style="left:1409px;top:528.76px;font-size:16px;line-height:16px;color:#222">101</div>
<div class="b" style="left:1054px;top:579.5px;width:424px;height:1px;background:#efefef"></div>
<div class="b" style="left:1063px;top:614.6px;width:415px;height:41.5px;background:#e4eefb;border-radius:9px;color:#1a6ad6;font-size:16.5px;line-height:41.5px;text-align:center;font-weight:bold;white-space:nowrap;letter-spacing:0px">View PO Information</div>
<div class="b" style="left:1063px;top:669px;width:415px;height:41.5px;background:#e4eefb;border-radius:9px;color:#1a6ad6;font-size:16.5px;line-height:41.5px;text-align:center;font-weight:bold;white-space:nowrap;letter-spacing:-0.1px">Update Trailer / Lane Information</div>
<div class="b" style="left:1063px;top:723.6px;width:415px;height:41.5px;background:#e4eefb;border-radius:9px;color:#1a6ad6;font-size:16.5px;line-height:41.5px;text-align:center;font-weight:bold;white-space:nowrap;letter-spacing:-0.38px">Go to FD 1 Dock Group Queue</div>
</body></html>
